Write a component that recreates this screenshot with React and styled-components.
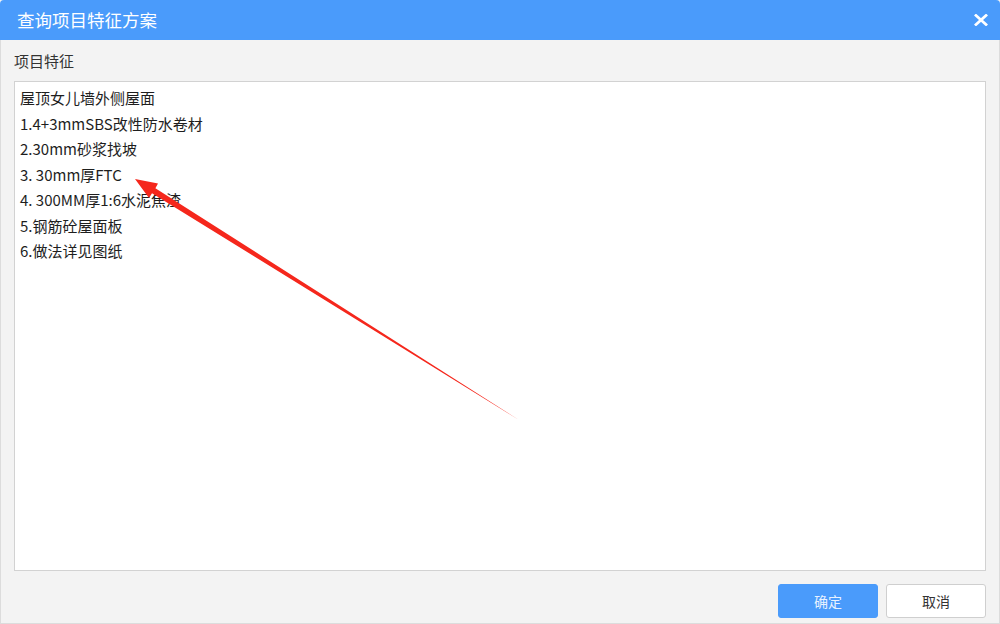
import React from "react";
import styled, { createGlobalStyle } from "styled-components";

const Global = createGlobalStyle`
  html, body { margin: 0; padding: 0; background: #f3f3f3; }
  body { font-family: "Microsoft YaHei", "Noto Sans CJK SC", sans-serif; }
  * { box-sizing: border-box; }
`;

const Window = styled.div`
  position: relative;
  width: 1000px;
  height: 624px;
  display: flex;
  flex-direction: column;
  background: #f3f3f3;
  overflow: hidden;
`;

const Header = styled.div`
  height: 40px;
  flex: none;
  background: #4a9bfb;
  border-radius: 4px 4px 0 0;
  display: flex;
  align-items: center;
  justify-content: space-between;
  padding: 0 12px 0 17px;
`;

const Title = styled.div`
  color: #fff;
  font-size: 17.5px;
  line-height: 20px;
`;

const CloseBtn = styled.button`
  border: none;
  background: transparent;
  padding: 0;
  width: 14px;
  height: 12px;
  display: flex;
  align-items: center;
  justify-content: center;
  cursor: pointer;
`;

const Body = styled.div`
  flex: 1;
  display: flex;
  flex-direction: column;
  border: 1px solid #dcdcdc;
  border-top: none;
  padding: 10px 13px 5px 13px;
`;

const Label = styled.div`
  font-size: 15px;
  line-height: 22px;
  color: #333;
`;

const TextBox = styled.div`
  margin-top: 9px;
  height: 490px;
  background: #fff;
  border: 1px solid #d2d2d2;
  padding: 3px 5px;
  font-size: 15px;
  line-height: 25.5px;
  color: #1e1e1e;
  white-space: pre-line;
`;

const Footer = styled.div`
  flex: 1;
  display: flex;
  justify-content: flex-end;
  align-items: flex-end;
  gap: 8px;
`;

const Button = styled.button`
  width: 100px;
  height: 34px;
  border-radius: 3px;
  font-family: inherit;
  font-size: 14px;
  cursor: pointer;
  border: 1px solid ${(p) => (p.$primary ? "#4a9bfb" : "#cfcfcf")};
  background: ${(p) => (p.$primary ? "#4a9bfb" : "#fff")};
  color: ${(p) => (p.$primary ? "#e8f2ff" : "#333")};
`;

const Overlay = styled.svg`
  position: absolute;
  left: 0;
  top: 0;
  pointer-events: none;
`;

const lines = [
  "屋顶女儿墙外侧屋面",
  "1.4+3mmSBS改性防水卷材",
  "2.30mm砂浆找坡",
  "3. 30mm厚FTC",
  "4. 300MM厚1:6水泥焦渣",
  "5.钢筋砼屋面板",
  "6.做法详见图纸",
];

export default function App() {
  return (
    <>
      <Global />
      <Window>
        <Header>
          <Title>查询项目特征方案</Title>
          <CloseBtn aria-label="close">
            <svg width="14" height="12" viewBox="0 0 14 12">
              <path d="M2 1.5 L12 10.5 M12 1.5 L2 10.5" stroke="#fff" strokeWidth="2.8" strokeLinecap="square" />
            </svg>
          </CloseBtn>
        </Header>
        <Body>
          <Label>项目特征</Label>
          <TextBox>{lines.join("\n")}</TextBox>
          <Footer>
            <Button $primary>确定</Button>
            <Button>取消</Button>
          </Footer>
        </Body>
        <Overlay width="1000" height="624" viewBox="0 0 1000 624">
          <polygon
            points="135,179 158,183.5 155.4,188.2 519,420 152,193.2 149,198"
            fill="#f5271c"
          />
        </Overlay>
      </Window>
    </>
  );
}
